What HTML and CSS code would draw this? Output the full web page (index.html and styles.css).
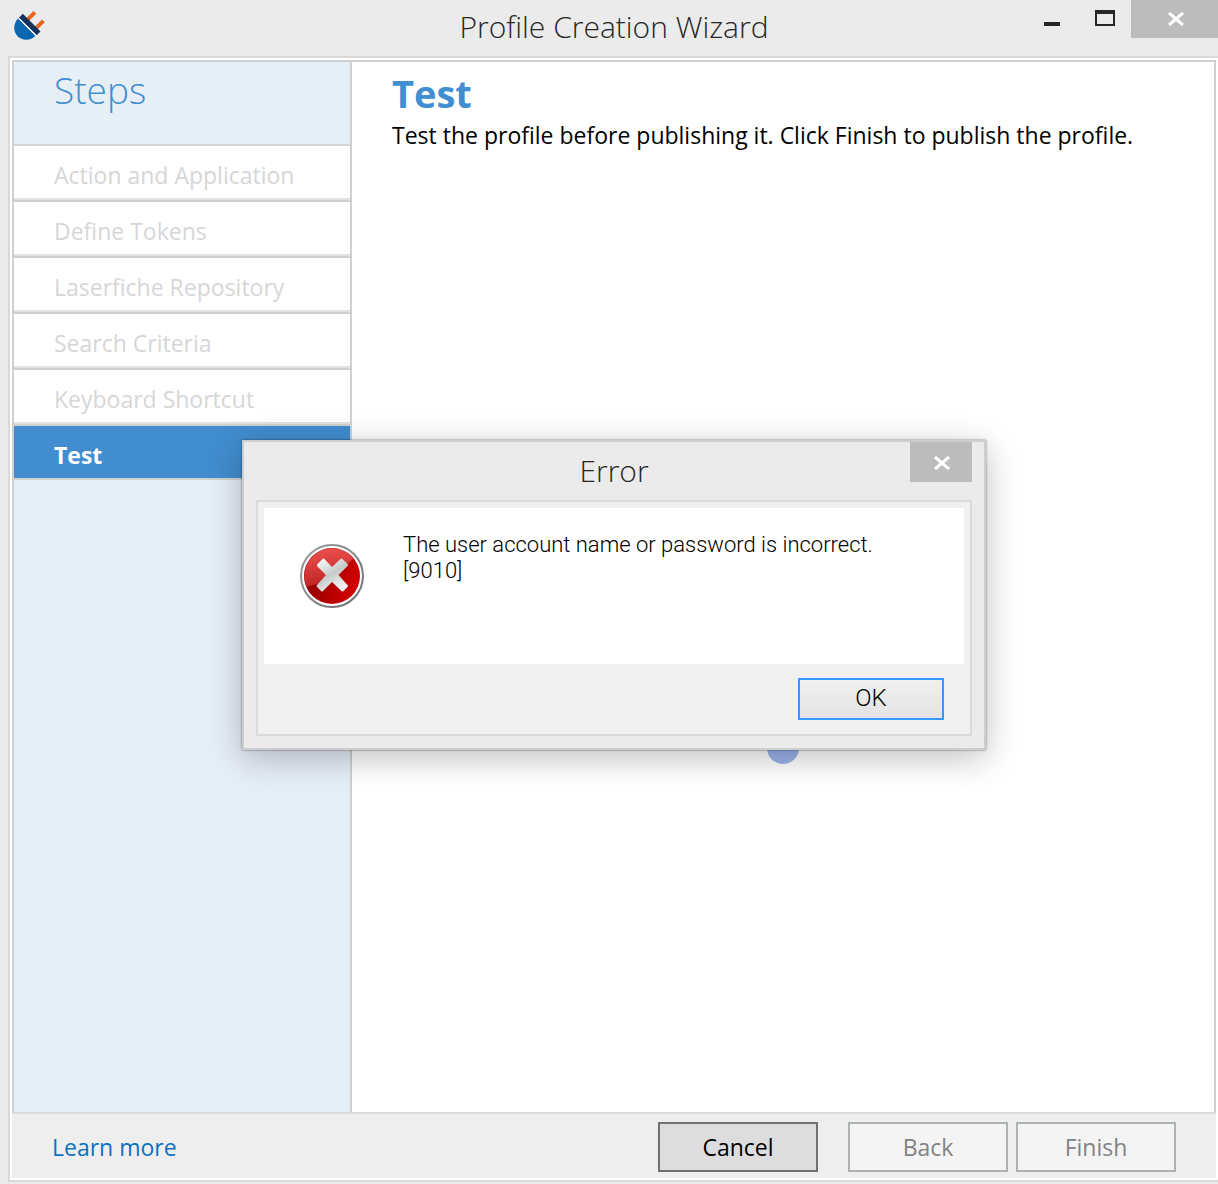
FILE: index.html
```html
<!DOCTYPE html>
<html lang="en">
<head>
<meta charset="utf-8">
<title>Profile Creation Wizard</title>
<link rel="stylesheet" href="styles.css">
</head>
<body>
<div class="window">
  <header class="titlebar">
    <svg class="app-icon" viewBox="0 0 32 32" aria-hidden="true">
      <g transform="translate(16.500 15.500) rotate(45)">
        <path d="M-7.500-14.500h4v11h-4zM4.500-14.500h4v11h-4z" fill="#e9641c"/>
        <path d="M-13-5h25v5.500h-25z" fill="#14335f"/>
        <path d="M-13 1.500h24.500a12.200 13 0 0 1-24.500 0z" fill="#0a67b0"/>
        <path d="M-13 .5h25v1.200h-25z" fill="#fff"/>
      </g>
    </svg>
    <h1 class="title">Profile Creation Wizard</h1>
    <div class="window-controls">
      <button class="control minimize" type="button" aria-label="Minimize">
        <svg viewBox="0 0 16 4" width="16" height="4"><path d="M0 0h16v4H0z" fill="#262626"/></svg>
      </button>
      <button class="control maximize" type="button" aria-label="Maximize">
        <svg viewBox="0 0 20 16" width="20" height="16"><path d="M0 0h20v16H0zM2 4v10h16V4z" fill="#262626" fill-rule="evenodd"/></svg>
      </button>
      <button class="control close" type="button" aria-label="Close">
        <svg viewBox="0 0 16 14" width="16" height="14"><path d="M1 1L15 13M15 1L1 13" stroke="#fff" stroke-width="3"/></svg>
      </button>
    </div>
  </header>
  <div class="frame">
    <div class="content">
      <nav class="sidebar" aria-label="Steps">
        <h2 class="steps-title">Steps</h2>
        <ol class="steps">
          <li class="step">Action and Application</li>
          <li class="step">Define Tokens</li>
          <li class="step">Laserfiche Repository</li>
          <li class="step">Search Criteria</li>
          <li class="step">Keyboard Shortcut</li>
          <li class="step current" aria-current="step">Test</li>
        </ol>
      </nav>
      <main class="page">
        <h2 class="page-title">Test</h2>
        <p class="page-text">Test the profile before publishing it. Click Finish to publish the profile.</p>
        <span class="progress-dot"></span>
      </main>
    </div>
    <footer class="footer">
      <a class="learn" href="#">Learn more</a>
      <button class="btn cancel" type="button">Cancel</button>
      <button class="btn" type="button" disabled>Back</button>
      <button class="btn" type="button" disabled>Finish</button>
    </footer>
  </div>
</div>

<div class="dialog" role="alertdialog" aria-labelledby="error-title" aria-describedby="error-text">
  <div class="dialog-bar">
    <h2 class="dialog-title" id="error-title">Error</h2>
    <button class="dialog-close" type="button" aria-label="Close">
      <svg viewBox="0 0 16 14" width="16" height="14"><path d="M1 1L15 13M15 1L1 13" stroke="#fff" stroke-width="3"/></svg>
    </button>
  </div>
  <div class="dialog-body">
    <div class="message">
      <svg class="error-icon" viewBox="0 0 64 64" aria-hidden="true">
        <defs>
          <linearGradient id="red" x1="0.200" y1="0.600" x2="0.900" y2="0.900"><stop offset="0" stop-color="#980000"/><stop offset="1" stop-color="#d80000"/></linearGradient>
          <linearGradient id="gloss" x1="0.300" y1="0" x2="0.500" y2="1"><stop offset="0" stop-color="#ee5050"/><stop offset="1" stop-color="#bc2020"/></linearGradient>
          <linearGradient id="cross" x1="0" y1="0" x2="0.600" y2="1"><stop offset="0" stop-color="#fff"/><stop offset="0.550" stop-color="#c8caca"/><stop offset="1" stop-color="#f4f4f4"/></linearGradient>
          <linearGradient id="ring" x1="0" y1="0" x2="1" y2="1"><stop offset="0" stop-color="#a0a0a0"/><stop offset="1" stop-color="#6c6c6c"/></linearGradient>
        </defs>
        <circle cx="32" cy="32" r="31" fill="#fff" stroke="url(#ring)" stroke-width="2"/>
        <circle cx="32" cy="32" r="28" fill="url(#red)"/>
        <path d="M6.500 43A28 28 0 0 1 54 14.500C48 19 42 25 32 32 24 37 15 41 6.500 43z" fill="url(#gloss)"/>
        <path d="M17.500 20l5-5q1-.8 2 0L32 23l8.500-8q1-.8 2 0l5 5q1 1 0 2L38.500 31l9 10q1 1 0 2l-4 4q-1 1-2 0L32 38l-9 9q-1 1-2 0l-4-4q-1-1 0-2l9-10-9-9q-.5-1 .5-2z" fill="url(#cross)"/>
      </svg>
      <p class="message-text" id="error-text">The user account name or password is incorrect.<br>[9010]</p>
    </div>
    <div class="dialog-actions">
      <button class="ok" type="button">OK</button>
    </div>
  </div>
</div>
</body>
</html>
```
FILE: styles.css
```css
* { box-sizing: border-box; }

body {
  margin: 0;
  background: #ebebeb;
  color: #000;
  font: 23px/32px "Open Sans", "Noto Sans", sans-serif;
}

h1, h2, p, ol { margin: 0; padding: 0; font-weight: 400; }
button { font: inherit; padding: 0; }
svg { display: block; }

.window {
  min-height: 100vh;
  padding-bottom: 2px;
  display: flex;
  flex-direction: column;
}

.titlebar {
  height: 56px;
  display: grid;
  grid-template-columns: 204px 1fr 194px;
}
.app-icon { width: 32px; height: 32px; margin: 11px 0 0 12px; overflow: visible; }
.title {
  padding-top: 7px;
  color: #262626;
  font: 300 30px/40px "Open Sans", sans-serif;
  text-align: center;
}
.window-controls { display: flex; justify-content: flex-end; }
.control {
  width: 54px;
  height: 38px;
  display: flex;
  justify-content: center;
  align-items: center;
  border: 0;
  background: none;
}
.minimize { align-items: flex-end; padding: 0 0 12px 2px; }
.maximize { padding: 0 0 2px 2px; }
.close { width: 88px; padding-left: 4px; background: #bcbcbc; }

.frame {
  flex: 1;
  margin-left: 8px;
  padding: 2px;
  display: flex;
  flex-direction: column;
  border: solid #d9d9d9;
  border-width: 2px 0 2px 2px;
  background: #fff;
}
.content {
  flex: 1;
  display: grid;
  grid-template-columns: 338px 1fr;
  border: 2px solid #d0d0d0;
  border-bottom-color: #d9dbdc;
}

.sidebar { border-right: 2px solid #d0d0d0; background: #e6eef6; }
.steps-title {
  height: 84px;
  padding: 4px 0 0 40px;
  border-bottom: 2px solid #d4d6d8;
  color: #418fd0;
  font: 300 37px/48px "Open Sans", sans-serif;
}
.steps { list-style: none; }
.step {
  height: 56px;
  padding: 13px 0 0 40px;
  border-bottom: 2px solid #d0d0d0;
  background: #fff;
  box-shadow: inset 0 -2px #dfe1e2;
  color: #d6d6d6;
}
.current {
  height: 54px;
  background: #418dcf;
  box-shadow: none;
  color: #fff;
  font-weight: 700;
}

.page { position: relative; padding: 5px 40px; }
.page-title { color: #418fd0; font-size: 38px; font-weight: 700; line-height: 52px; }
.progress-dot {
  position: absolute;
  top: 670px;
  left: 50%;
  width: 32px;
  height: 32px;
  margin-left: -16px;
  border-radius: 50%;
  background: #9bb4ea;
}

.footer {
  height: 64px;
  padding: 2px 40px 0;
  display: flex;
  align-items: center;
  gap: 8px;
  background: #eee;
}
.learn { margin-right: auto; color: #0a72c4; text-decoration: none; }
.btn {
  width: 160px;
  height: 50px;
  border: 2px solid #adb2b5;
  background: #f4f4f4;
  color: #838383;
}
.cancel { margin-right: 22px; border-color: #707070; background: #ddd; color: #000; }

.dialog {
  position: absolute;
  top: 440px;
  left: 242px;
  width: 744px;
  padding: 0 12px 12px;
  border: 2px solid #cdcdcd;
  background: #ebebeb;
  box-shadow: 0 0 2px rgba(0, 0, 0, .5), 0 8px 32px rgba(0, 0, 0, .25);
}
.dialog-bar {
  height: 58px;
  display: grid;
  grid-template-columns: 62px 1fr 62px;
}
.dialog-title {
  grid-column: 2;
  padding-top: 9px;
  color: #262626;
  font: 300 30px/40px "Open Sans", sans-serif;
  text-align: center;
}
.dialog-close {
  height: 40px;
  padding: 2px 0 0 2px;
  display: grid;
  place-items: center;
  border: 0;
  background: #bcbcbc;
}
.dialog-body { padding: 6px; border: 2px solid #dadada; background: #f0f0f0; }
.message {
  min-height: 156px;
  padding: 24px 36px;
  display: flex;
  gap: 39px;
  background: #fff;
}
.error-icon { flex: none; width: 64px; height: 64px; margin-top: 12px; }
.message-text { font: 300 22px/26px Roboto, sans-serif; }
.dialog-actions { padding: 14px 20px 8px; display: flex; justify-content: flex-end; }
.ok {
  width: 146px;
  height: 42px;
  padding-bottom: 2px;
  border: 2px solid #3399ff;
  background: linear-gradient(#f0f0f0, #e3e3e3);
  color: #000;
  font: 300 24px/36px Roboto, sans-serif;
}
```
